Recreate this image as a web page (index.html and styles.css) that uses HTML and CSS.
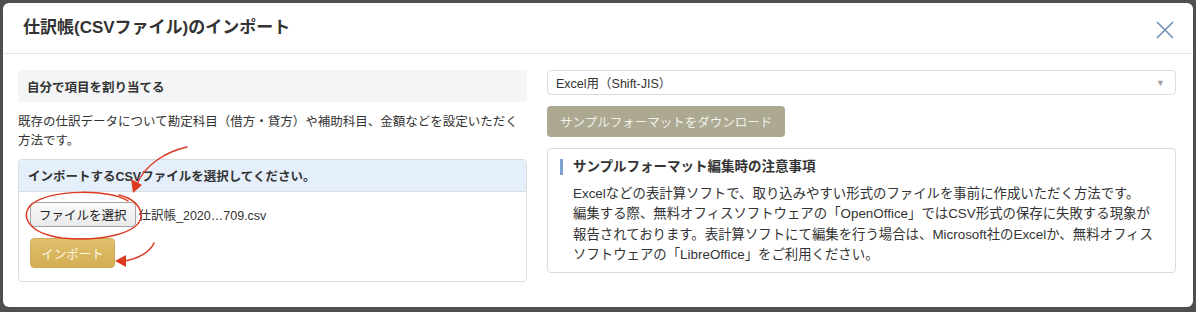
FILE: index.html
```html
<!DOCTYPE html>
<html lang="ja">

<head>
    <meta charset="UTF-8">
    <meta name="viewport" content="width=device-width, initial-scale=1.0">
    <title>仕訳帳(CSVファイル)のインポート</title>
    <link rel="stylesheet" href="styles.css">
</head>

<body>
    <div class="modal">
        <div class="modal_header">
            <h2>仕訳帳(CSVファイル)のインポート</h2>
            <button class="close" aria-label="閉じる">
                <svg width="18" height="18" viewBox="0 0 18 18">
                    <path d="M1 1L17 17M17 1L1 17" stroke="#6d8fb6" stroke-width="1.6" fill="none" />
                </svg>
            </button>
        </div>
        <div class="modal_body">
            <div class="col_left">
                <div class="section_title">自分で項目を割り当てる</div>
                <p class="desc">既存の仕訳データについて勘定科目（借方・貸方）や補助科目、金額などを設定いただく方法です。</p>
                <div class="panel">
                    <div class="panel_heading">インポートするCSVファイルを選択してください。</div>
                    <div class="panel_body">
                        <div class="file_row">
                            <button class="file_btn">ファイルを選択</button>
                            <span class="file_name">仕訳帳_2020…709.csv</span>
                        </div>
                        <button class="import_btn">インポート</button>
                    </div>
                </div>
            </div>
            <div class="col_right">
                <div class="select">
                    <span>Excel用（Shift-JIS）</span>
                    <span class="caret">▼</span>
                </div>
                <button class="download_btn">サンプルフォーマットをダウンロード</button>
                <div class="note">
                    <h3>サンプルフォーマット編集時の注意事項</h3>
                    <p>Excelなどの表計算ソフトで、取り込みやすい形式のファイルを事前に作成いただく方法です。<br>
                        編集する際、無料オフィスソフトウェアの「OpenOffice」ではCSV形式の保存に失敗する現象が報告されております。表計算ソフトにて編集を行う場合は、Microsoft社のExcelか、無料オフィスソフトウェアの「LibreOffice」をご利用ください。</p>
                </div>
            </div>
        </div>
    </div>

    <!-- 赤い注釈 -->
    <svg class="marks" width="1196" height="312" viewBox="0 0 1196 312">
        <g fill="none" stroke="#dc3b22" stroke-width="1.5" stroke-linecap="round">
            <path d="M128 201 C 110 189, 52 189, 32 204 C 20 214, 26 233, 62 238 C 102 242, 139 233, 141 217 C 142 207, 133 198, 119 195" />
            <path d="M187 147 C 165 152, 145 165, 137 184" />
            <path d="M154 243 C 150 252, 138 259, 124 261" />
        </g>
        <g fill="#dc3b22">
            <path d="M133 193 L131 179 L142 185 Z" />
            <path d="M115 261 L126 255 L126 267 Z" />
        </g>
    </svg>
</body>

</html>
```

FILE: styles.css
```css
* {
    box-sizing: border-box;
}

body {
    position: relative;
    margin: 0;
    padding: 3px 3px 5px 3px;
    height: 312px;
    background: #4f4f4f;
    font-family: "Liberation Sans", "Noto Sans CJK JP", sans-serif;
    color: #333;
    overflow: hidden;
}

.modal {
    height: 304px;
    background: #fff;
    border-radius: 6px;
}

.modal_header {
    display: flex;
    align-items: center;
    justify-content: space-between;
    height: 51px;
    padding: 0 19px 0 20px;
    border-bottom: 1px solid #e6e6e6;
}

.modal_header h2 {
    margin: 0;
    font-size: 17px;
    font-weight: bold;
    line-height: 24px;
}

.close {
    display: flex;
    padding: 0;
    margin-top: 3px;
    background: none;
    border: none;
}

.modal_body {
    display: flex;
    gap: 20px;
    padding: 16px 17px 0 15px;
}

.col_left {
    width: 509px;
}

.col_right {
    flex: 1;
}

.section_title {
    display: flex;
    align-items: center;
    height: 32px;
    padding: 0 9px;
    background: #f3f5f7;
    font-size: 12.5px;
    font-weight: bold;
}

.desc {
    margin: 11px 0 8px;
    font-size: 12.5px;
    line-height: 19px;
}

.panel {
    border: 1px solid #dadde0;
    border-radius: 4px;
}

.panel_heading {
    display: flex;
    align-items: center;
    height: 32px;
    padding: 0 9px;
    background: #e4effb;
    border-bottom: 1px solid #dadde0;
    border-radius: 4px 4px 0 0;
    font-size: 12.5px;
    font-weight: bold;
}

.panel_body {
    padding: 10px 11px 13px;
}

.file_row {
    display: flex;
    align-items: center;
    gap: 3px;
}

.file_btn {
    height: 25px;
    padding: 0 8px;
    background: linear-gradient(#fafafa, #e9e9e9);
    border: 1px solid #a4a4a4;
    border-radius: 4px;
    font-family: inherit;
    font-size: 12.5px;
    color: #222;
}

.file_name {
    font-size: 12.5px;
    color: #333;
}

.import_btn {
    display: block;
    width: 85px;
    height: 30px;
    margin-top: 11px;
    background: linear-gradient(#e0c16e, #d3ad52);
    border: 1px solid #d0aa52;
    border-radius: 4px;
    font-family: inherit;
    font-size: 12.5px;
    color: #fdf6e3;
}

.select {
    display: flex;
    align-items: center;
    justify-content: space-between;
    height: 25px;
    padding: 0 8px;
    border: 1px solid #dcdcdc;
    border-radius: 4px;
    font-size: 12.5px;
}

.caret {
    font-size: 9px;
    color: #a0a0a0;
    margin-right: 2px;
}

.download_btn {
    display: block;
    height: 31px;
    margin-top: 11px;
    padding: 0 13px;
    background: #aca891;
    border: none;
    border-radius: 4px;
    font-family: inherit;
    font-size: 12.5px;
    color: #f1f0ea;
}

.note {
    margin-top: 11px;
    padding: 8px 12px 6px 12px;
    border: 1px solid #dcdcdc;
    border-radius: 4px;
}

.note h3 {
    margin: 0;
    padding-left: 10px;
    border-left: 3px solid #7ea3d3;
    font-size: 13.5px;
    font-weight: bold;
    line-height: 16px;
    margin-top: 2px;
}

.note p {
    margin: 9px 0 0 13px;
    font-size: 13.4px;
    line-height: 20.4px;
}

.marks {
    position: absolute;
    top: 0;
    left: 0;
    pointer-events: none;
}
```
